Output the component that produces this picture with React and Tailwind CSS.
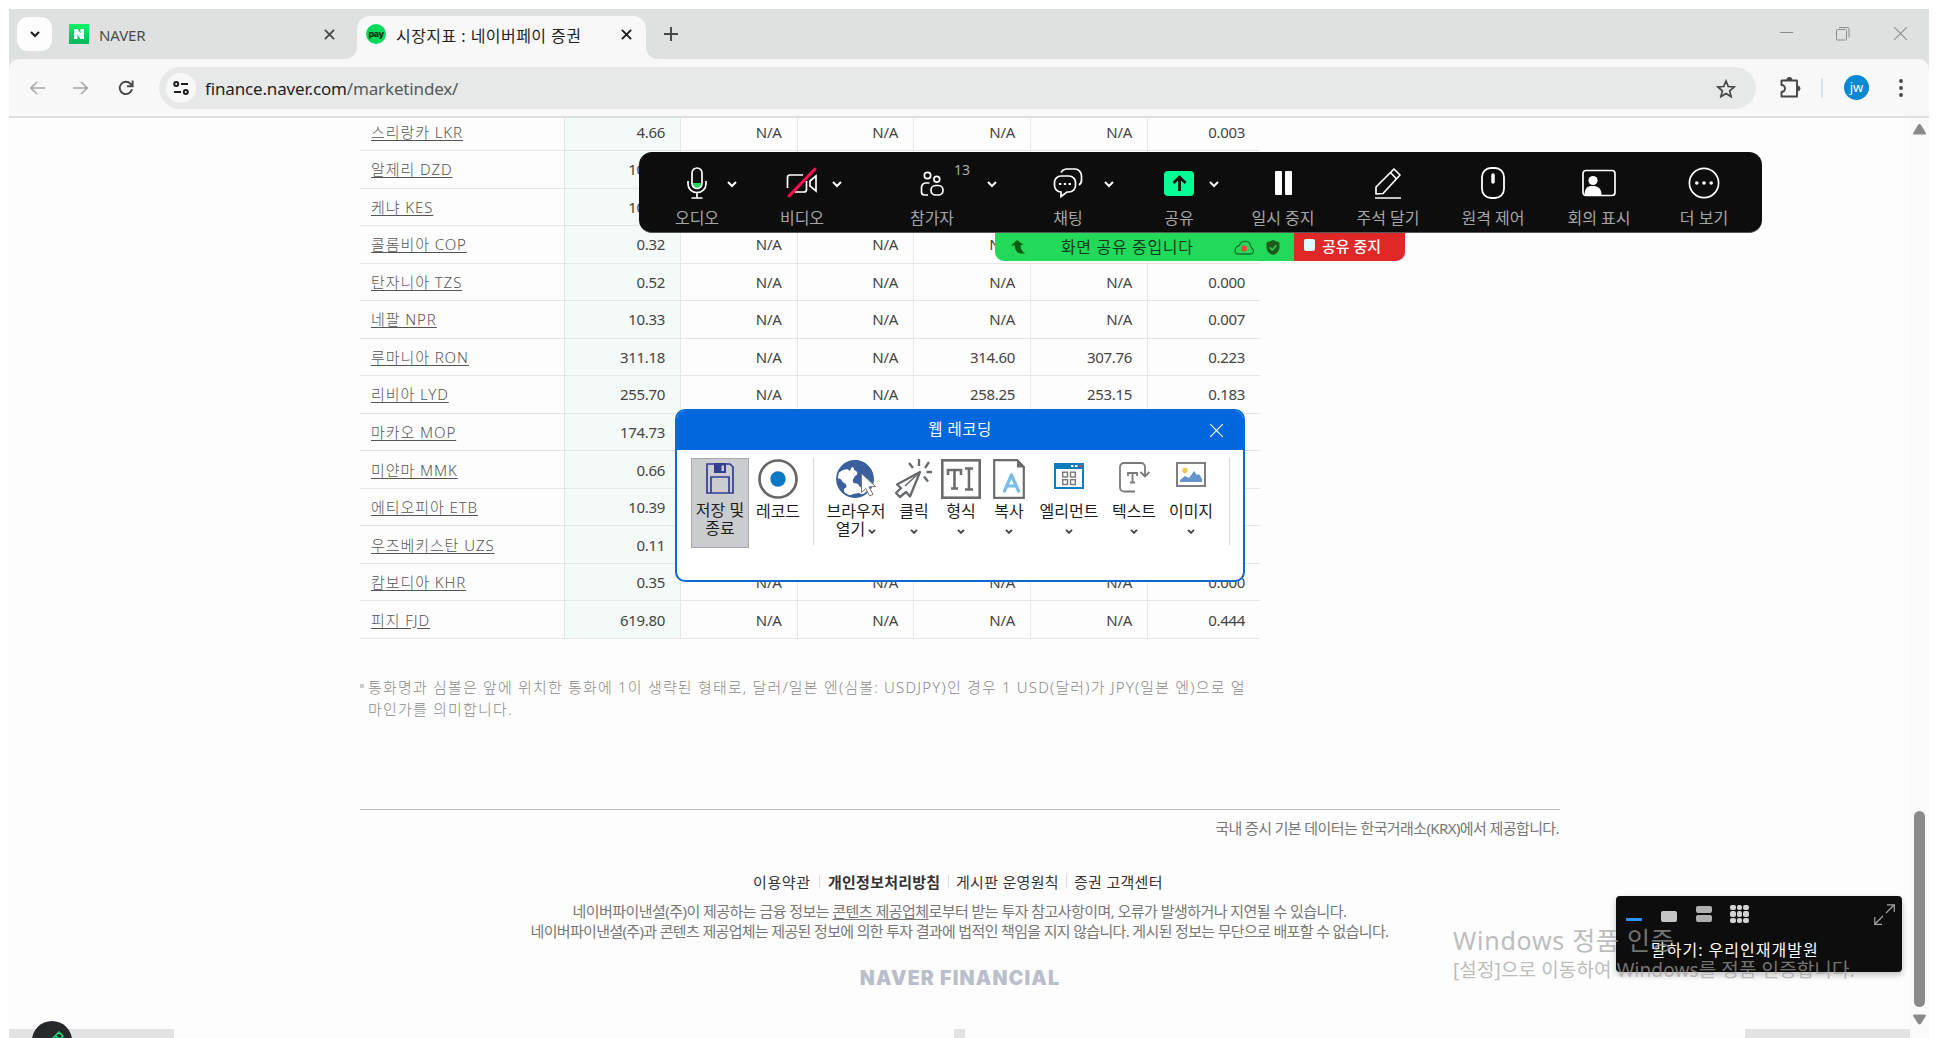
import React from "react";

const rows = [
  ["스리랑카 LKR", "4.66", "N/A", "N/A", "N/A", "N/A", "0.003"],
  ["알제리 DZD", "10.58", "", "", "", "", ""],
  ["케냐 KES", "10.80", "", "", "", "", ""],
  ["콜롬비아 COP", "0.32", "N/A", "N/A", "N/A", "", ""],
  ["탄자니아 TZS", "0.52", "N/A", "N/A", "N/A", "N/A", "0.000"],
  ["네팔 NPR", "10.33", "N/A", "N/A", "N/A", "N/A", "0.007"],
  ["루마니아 RON", "311.18", "N/A", "N/A", "314.60", "307.76", "0.223"],
  ["리비아 LYD", "255.70", "N/A", "N/A", "258.25", "253.15", "0.183"],
  ["마카오 MOP", "174.73", "", "", "", "", ""],
  ["미얀마 MMK", "0.66", "", "", "", "", ""],
  ["에티오피아 ETB", "10.39", "", "", "", "", ""],
  ["우즈베키스탄 UZS", "0.11", "", "", "", "", ""],
  ["캄보디아 KHR", "0.35", "N/A", "N/A", "N/A", "N/A", "0.000"],
  ["피지 FJD", "619.80", "N/A", "N/A", "N/A", "N/A", "0.444"],
];

function Svg({ w, h, box, className = "", sw = 2, children }) {
  return (
    <svg
      width={w}
      height={h}
      viewBox={box || `0 0 ${w} ${h}`}
      fill="none"
      stroke="currentColor"
      strokeWidth={sw}
      className={"block shrink-0 " + className}
    >
      {children}
    </svg>
  );
}

const Cross = ({ size, sw, className }) => (
  <Svg w={size} h={size} box="0 0 10 10" sw={sw} className={className}>
    <path d="M0.8 0.8L9.2 9.2M9.2 0.8L0.8 9.2" />
  </Svg>
);

function TabStrip() {
  return (
    <div className="flex h-[50px] w-full bg-[#dfe1e0]">
      <div className="ml-2 mt-2 flex h-[34px] w-[35px] items-center justify-center rounded-[11px] bg-[#fdfdfd]">
        <Svg w={10} h={7} sw={2.2} className="text-[#1f1f1f]"><path d="M1 1l4 4 4-4" /></Svg>
      </div>
      <div className="ml-[17px] flex h-[50px] w-[288px] items-center">
        <div className="flex h-5 w-5 items-center justify-center bg-gradient-to-b from-[#02f767] to-[#05b560]">
          <Svg w={10} h={10} sw={0} className="text-white">
            <path fill="#fff" d="M0 0h3.5l3 4.6V0H10v10H6.5l-3-4.6V10H0z" />
          </Svg>
        </div>
        <span className="ml-[10px] mt-[3px] text-[15px] tracking-[-0.1px] text-[#474b4a]">NAVER</span>
        <Cross size={11} sw={1.6} className="ml-auto mr-[22px] text-[#444746]" />
      </div>
      <div className="relative mt-[7px] flex h-[43px] w-[289px] items-center rounded-t-[13px] bg-[#f8f8f8]">
        <Svg w={12} h={12} sw={0} className="absolute -left-3 bottom-0"><path fill="#f8f8f8" d="M12 0v12H0A12 12 0 0 0 12 0z" /></Svg>
        <Svg w={12} h={12} sw={0} className="absolute -right-3 bottom-0"><path fill="#f8f8f8" d="M0 0v12h12A12 12 0 0 1 0 0z" /></Svg>
        <div className="-mt-[7px] ml-[9px] flex h-5 w-5 items-center justify-center rounded-full bg-[#03d95b] font-['Inter'] text-[9px] font-extrabold leading-none tracking-[-0.5px] text-[#062b14]">
          <span className="-mt-[2px]">pay</span>
        </div>
        <span className="-mt-[3px] ml-[10px] whitespace-nowrap text-[16px] tracking-[0.45px] text-[#1f1f1f]">시장지표 : 네이버페이 증권</span>
        <Cross size={11} sw={1.8} className="-mt-[7px] ml-auto mr-[14px] text-[#1f1f1f]" />
      </div>
      <Svg w={14} h={14} sw={1.9} className="ml-[18px] mt-[18px] text-[#444746]"><path d="M7 0v14M0 7h14" /></Svg>
      <div className="ml-auto flex items-start text-[#8b8d8c]">
        <Svg w={13} h={2} sw={1} className="mt-[23px]"><path d="M0 .5h13" /></Svg>
        <Svg w={14} h={14} sw={1} className="ml-[43px] mt-[18px]">
          <rect x=".5" y="2.5" width="10" height="10.5" rx="1" />
          <path d="M3 .5h8.5a1.5 1.5 0 0 1 1.5 1.5v8.5" />
        </Svg>
        <Svg w={13} h={13} sw={1.1} className="ml-[44px] mr-[22px] mt-[18px]"><path d="M0 0l13 13M13 0L0 13" /></Svg>
      </div>
    </div>
  );
}

function AddressRow() {
  return (
    <div className="h-[59px] w-full bg-[#dfe1e0]">
      <div className="flex h-[59px] items-start rounded-t-[10px] border-b-2 border-[#dedfde] bg-[#f8f8f8]">
        <Svg w={16} h={14} sw={1.7} className="ml-[20px] mt-[22px] text-[#a5a7a6]"><path d="M16 7H2M8 1L1.8 7 8 13" /></Svg>
        <Svg w={16} h={14} sw={1.7} className="ml-[28px] mt-[22px] text-[#a5a7a6]"><path d="M0 7h14M8 1l6.2 6L8 13" /></Svg>
        <Svg w={16} h={16} sw={1.9} className="ml-[29px] mt-[21px] text-[#444746]">
          <path d="M14 9.2A6.2 6.2 0 1 1 12.6 3.8L14 5.6" /><path d="M14.6 0.6v5.6H9" />
        </Svg>
        <div className="ml-[25px] mt-[8px] flex h-[42px] w-[1597px] items-center rounded-full bg-[#e7e9e8] pl-[7px]">
          <div className="flex h-[30px] w-[30px] items-center justify-center rounded-full bg-[#f8f8f8]">
            <Svg w={16} h={14} sw={2} className="text-[#1f1f1f]">
              <circle cx="3.2" cy="3" r="2" /><path d="M8 3h7M1 11h7" /><circle cx="12.8" cy="11" r="2" />
            </Svg>
          </div>
          <span className="ml-[9px] mt-[2px] text-[17px] tracking-[-0.16px] text-[#1f1f1f]">finance.naver.com<span className="text-[#55595a]">/marketindex/</span></span>
          <Svg w={20} h={19} sw={1.7} className="ml-auto mr-[20px] text-[#444746]">
            <path d="M10 2l2.3 5.5 5.9.5-4.5 3.9 1.4 5.8L10 14.6l-5.1 3.1 1.4-5.8L1.8 8l5.9-.5z" />
          </Svg>
        </div>
        <Svg w={21} h={21} sw={1.9} className="ml-[24px] mt-[18px] text-[#444746]">
          <path d="M1.5 3.5h15.5v16H1.5v-4.5a3 3 0 0 0 0-7z" strokeLinejoin="round" />
          <path d="M6.8 3a2.6 2.6 0 0 1 5.2 0zM17.5 9a2.4 2.4 0 0 1 0 5z" fill="currentColor" strokeWidth="1" />
        </Svg>
        <div className="ml-[20px] mt-[19px] h-5 w-[2px] rounded bg-[#d3e3ea]" />
        <div className="ml-[21px] mt-[16px] flex h-[25px] w-[25px] items-center justify-center rounded-full bg-[#0788d4] text-[13px] leading-none text-white">
          <span className="-mt-[1px]">jw</span>
        </div>
        <Svg w={4} h={18} sw={0} className="ml-[30px] mt-[20px] text-[#444746]">
          <g fill="currentColor"><circle cx="2" cy="2" r="1.9" /><circle cx="2" cy="9" r="1.9" /><circle cx="2" cy="16" r="1.9" /></g>
        </Svg>
      </div>
    </div>
  );
}

function RateTable() {
  return (
    <table className="ml-[351px] w-[900px] table-fixed border-collapse text-[15px] text-[#444]">
      <colgroup>
        <col className="w-[204px]" /><col className="w-[116.5px]" /><col className="w-[116.5px]" /><col className="w-[116.5px]" />
        <col className="w-[117px]" /><col className="w-[117px]" /><col className="w-[112.5px]" />
      </colgroup>
      <tbody>
        {rows.map(([name, ...cells]) => (
          <tr key={name} className="h-[37.54px] border-b border-[#e6e6e6]">
            <td className="p-0 pl-[11px] text-[15px] font-light leading-[18px] text-[#555]">
              <span className="tracking-[0.92px] underline underline-offset-[2px]">{name}</span>
            </td>
            {cells.map((c, i) => (
              <td
                key={i}
                className={
                  "border-l border-[#e6e6e6] p-0 pr-[15px] text-right leading-[18px] tracking-[-0.3px] " +
                  (i === 0 ? "bg-[#f4faf7]" : "")
                }
              >
                {c}
              </td>
            ))}
          </tr>
        ))}
      </tbody>
    </table>
  );
}

function Footer() {
  return (
    <div className="ml-[351px] mt-[171px] w-[1200px] border-t border-[#bdbdbd]">
      <p className="mt-[8px] pr-px text-right text-[15px] leading-[20px] tracking-[-0.6px] text-[#777]">국내 증시 기본 데이터는 한국거래소(KRX)에서 제공합니다.</p>
      <div className="mt-[33px] flex h-[22px] items-center whitespace-nowrap pl-[393px] text-[15px] text-[#333]">
        <span className="w-[66px] tracking-[0.6px]">이용약관</span>
        <i className="h-[13px] w-px bg-[#ddd]" />
        <b className="ml-[8px] w-[120px] font-bold tracking-[0.25px]">개인정보처리방침</b>
        <i className="h-[13px] w-px bg-[#ddd]" />
        <span className="ml-[7px] w-[110px] tracking-[0.3px]">게시판 운영원칙</span>
        <i className="h-[13px] w-px bg-[#ddd]" />
        <span className="ml-[7px] tracking-[0.3px]">증권 고객센터</span>
      </div>
      <div className="-ml-px mt-[8px] text-center text-[15px] leading-[20px] text-[#777]">
        <p className="tracking-[-0.55px]">네이버파이낸셜(주)이 제공하는 금융 정보는 <span className="underline underline-offset-2">콘텐츠 제공업체</span>로부터 받는 투자 참고사항이며, 오류가 발생하거나 지연될 수 있습니다.</p>
        <p className="tracking-[-0.66px]">네이버파이낸셜(주)과 콘텐츠 제공업체는 제공된 정보에 의한 투자 결과에 법적인 책임을 지지 않습니다. 게시된 정보는 무단으로 배포할 수 없습니다.</p>
      </div>
      <p className="mt-[25px] text-center font-['Inter'] text-[19.500px] font-black leading-[24px] tracking-[1.2px] text-[#b9becb]">NAVER FINANCIAL</p>
    </div>
  );
}

const Chev = () => (
  <div className="flex w-5 justify-center pt-[29px]">
    <Svg w={10} h={7} sw={2}><path d="M1 1l4 4 4-4" /></Svg>
  </div>
);

function Tool({ label, className, children }) {
  return (
    <div className={"relative flex shrink-0 flex-col items-center " + className}>
      <div className="mt-[14px] flex h-[34px] items-center justify-center">{children}</div>
      <span className="mt-[7px] whitespace-nowrap text-[16px] leading-[22px] text-[#a6a6a6]">{label}</span>
    </div>
  );
}

function MeetingBar() {
  return (
    <div className="absolute left-[639px] top-[152px] w-[1123px]">
      <div className="flex h-[81px] rounded-[13px] border-b border-[#555] bg-[#0d0d0d] pl-[33px] text-white">
        <Tool label="오디오" className="w-[50px]">
          <Svg w={20} h={32} sw={1.7}>
            <path d="M5 16h10v2a5 3.8 0 0 1-10 0z" fill="#23d959" stroke="none" />
            <rect x="5" y="1" width="10" height="20.5" rx="5" />
            <path d="M1 14v3a9 8.5 0 0 0 18 0v-3M10 25.5V31M4.5 31h11" />
          </Svg>
        </Tool>
        <Chev />
        <Tool label="비디오" className="ml-[35px] w-[50px]">
          <Svg w={32} h={32} sw={1.7}>
            <path d="M17 8H4a2.5 2.5 0 0 0-2.5 2.5V21M9 25h9a2.5 2.5 0 0 0 2.500-2.500V14M30 9l-6 5v5l6 5z" />
            <path d="M3 29L29 2" stroke="#ff0c52" strokeWidth="3" strokeLinecap="round" />
          </Svg>
        </Tool>
        <Chev />
        <Tool label="참가자" className="ml-[60px] w-[50px]">
          <Svg w={24} h={26} sw={1.7} className="mt-[2px]">
            <circle cx="7.500" cy="4.500" r="3.200" /><circle cx="16.800" cy="8.300" r="2.900" />
            <path d="M9.500 12H5.500A4 4.500 0 0 0 1.500 16.500V21a3 3 0 0 0 3 3H8" />
            <rect x="11" y="14.500" width="12" height="9.500" rx="4.500" />
          </Svg>
          <span className="absolute left-[47px] top-[9px] text-[14px] leading-[18px] text-[#aaa]">13</span>
        </Tool>
        <div className="w-[25px]" />
        <Chev />
        <Tool label="채팅" className="ml-[41px] w-[50px]">
          <Svg w={30} h={32} sw={1.7}>
            <path d="M8 5.500A7 6 0 0 1 13 2h9a6.500 7 0 0 1 6.500 7v4A6.500 6 0 0 1 26 18" />
            <path d="M8 9h8a6.500 6.500 0 0 1 6.500 6.500v3A6.500 6.500 0 0 1 16 25h-2l-6 4.500V25A6.500 6.500 0 0 1 1.500 18.500v-3A6.500 6.500 0 0 1 8 9z" />
            <path d="M6 17h2.300M10.800 17h2.300M15.600 17h2.300" strokeWidth="2.200" />
          </Svg>
        </Tool>
        <div className="w-[6px]" />
        <Chev />
        <Tool label="공유" className="ml-[35px] w-[50px]">
          <div className="flex h-[25px] w-[30px] items-center justify-center rounded-[4px] bg-[#00ff94]">
            <Svg w={15} h={16} sw={2.800} className="text-[#0d0d0d]"><path d="M7.500 16V2M1.500 8l6-6 6 6" /></Svg>
          </div>
        </Tool>
        <Chev />
        <Tool label="일시 중지" className="ml-[24px] w-[70px]">
          <div className="flex gap-[3px]"><i className="h-[24px] w-[7px] rounded-[1px] bg-white" /><i className="h-[24px] w-[7px] rounded-[1px] bg-white" /></div>
        </Tool>
        <Tool label="주석 달기" className="ml-[35px] w-[70px]">
          <Svg w={28} h={32} sw={1.700}>
            <path d="M2 27v-7L20 2l6 6L9 26.500z" strokeLinejoin="round" /><path d="M16.500 5.500l6 6.500M1 31h26" />
          </Svg>
        </Tool>
        <Tool label="원격 제어" className="ml-[35px] w-[70px]">
          <Svg w={24} h={32} sw={1.800}><rect x="1" y="1" width="22" height="30" rx="9" /><path d="M12 8v7" strokeWidth="3.500" strokeLinecap="round" /></Svg>
        </Tool>
        <Tool label="회의 표시" className="ml-[36px] w-[70px]">
          <Svg w={34} h={28} sw={1.700}>
            <rect x="1" y="1.500" width="32" height="25" rx="3" />
            <circle cx="11" cy="11.500" r="4.600" fill="#fff" stroke="none" />
            <path d="M2.500 26c0-8 4-9 8.500-9s8.500 2 8.500 9z" fill="#fff" stroke="none" />
          </Svg>
        </Tool>
        <Tool label="더 보기" className="ml-[35px] w-[70px]">
          <Svg w={32} h={32} sw={1.700}>
            <circle cx="16" cy="16" r="14.600" />
            <g fill="#fff" stroke="none"><circle cx="8.800" cy="16" r="1.800" /><circle cx="16" cy="16" r="1.800" /><circle cx="23.200" cy="16" r="1.800" /></g>
          </Svg>
        </Tool>
      </div>
      <div className="ml-[356px] flex h-[28px] w-[410px] overflow-hidden rounded-b-[9px]">
        <div className="flex w-[299px] items-center bg-[#23d959]">
          <Svg w={15} h={14} sw={0} className="ml-[16px] text-[#0a5c10]"><path fill="currentColor" d="M6 0l6.500 5H9.500c0 4 1.500 6.500 5 8.500H9.500C5.500 12.500 3.800 9.500 3.800 5.500H0z" /></Svg>
          <span className="-mt-[1px] ml-[35px] w-[152px] whitespace-nowrap text-[16px] tracking-[0.65px] text-[#10391c]">화면 공유 중입니다</span>
          <Svg w={20} h={15} sw={1.300} className="ml-[21px] text-[#14732b]">
            <path d="M4 14h12.500a3 3 0 0 0 2.500-4.500C18 8 16.500 7.500 16.500 5.500 16 3 14 1 12 1.500 9 1 6 2 5.500 5.500 3 6 1 8.500 1 11a3 3 0 0 0 3 3z" />
            <circle cx="10" cy="8.500" r="3" fill="#ff4336" stroke="none" />
          </Svg>
          <Svg w={14} h={15} sw={1.500} className="ml-[12px] text-[#23d959]">
            <path d="M7 0l6.500 2.500V7c0 4-3 7-6.500 8C3.500 14 .5 11 .5 7V2.500z" fill="#1f5a1c" stroke="none" /><path d="M3.800 7.500L6.200 10l4.300-4.800" />
          </Svg>
        </div>
        <div className="flex flex-1 items-center bg-[#e02828] pl-[10px]">
          <i className="-mt-[5px] h-[12px] w-[11px] rounded-[2px] bg-[#dcfbff]" />
          <span className="-mt-[2px] ml-[7px] text-[15px] font-medium text-white">공유 중지</span>
        </div>
      </div>
    </div>
  );
}

function RibbonItem({ className, label, second, chevron, gap = "mt-[3px]", children }) {
  return (
    <div className={"flex shrink-0 flex-col items-center " + className}>
      <div className="flex h-[42px] items-center justify-center">{children}</div>
      <span className={"whitespace-nowrap text-[16px] leading-[17px] text-[#1c1c1c] " + gap}>{label}</span>
      {(second || chevron) && (
        <span className="flex h-[18px] items-center gap-[3px] whitespace-nowrap text-[16px] leading-[17px] text-[#1c1c1c]">
          {second}
          {chevron && <Svg w={8} h={5} sw={1.900} className="mt-[4px] text-[#444]"><path d="M1 .8l3 3 3-3" /></Svg>}
        </span>
      )}
    </div>
  );
}

function RecorderDialog() {
  return (
    <div className="absolute left-[675px] top-[409px] h-[173px] w-[570px] overflow-hidden rounded-[10px] border-2 border-[#0b6ad0] bg-white">
      <div className="relative flex h-[39px] items-center justify-center bg-[#0067dd]">
        <span className="-mt-px text-[15.500px] tracking-[0.5px] text-white">웹 레코딩</span>
        <Cross size={15} sw={0.800} className="absolute right-[19px] top-[12px] text-white" />
      </div>
      <div className="flex h-[96px] items-start pl-[14px] pt-[8px]">
        <RibbonItem label="저장 및" second="종료" gap="mt-px" className="h-[90px] w-[58px] border border-[#a6a7ab] bg-[#cbccd0]">
          <Svg w={28} h={31} sw={1.700} className="-mt-[4px] text-[#353c93]">
            <path d="M1 1h23l3 3v26H1z" /><path d="M8 0h12v10H8z" fill="#353c93" stroke="none" /><path d="M15.500 2.500h2.500v5.500h-2.500z" fill="#cbccd0" stroke="none" /><path d="M5 30V14h18v16" />
          </Svg>
        </RibbonItem>
        <RibbonItem label="레코드" className="ml-[4px] w-[50px]">
          <Svg w={40} h={40} sw={2.700} className="text-[#666]"><circle cx="20" cy="20" r="18.500" /><circle cx="20" cy="20" r="7.700" fill="#0a78c4" stroke="none" /></Svg>
        </RibbonItem>
        <div className="ml-[10px] h-[87px] w-px bg-[#d9d9d9]" />
        <RibbonItem label="브라우저" second="열기" chevron className="ml-[10px] w-[64px]">
          <Svg w={42} h={40} sw={1}>
            <circle cx="20" cy="20" r="18" fill="#fff" stroke="#3a609e" strokeWidth="1.800" />
            <path fill="#3a609e" stroke="none" d="M20 1.500A18.500 18.500 0 0 1 38.500 20c0 2-.4 4-1 6L27 15v14c-2-1-3-2-4-4-2-1-4 0-5-2s1-4 2-6c2-1 3-2 2-4s-3-1-3-3-2-2-3-1l-1 3-3-2-4 1-5 3C6 6 12 1.500 20 1.500zM1.700 19l4 1 2 3 3 2 1 3-3 2 1 5C4.500 32 1.700 26 1.700 19zM14 37l4-2 6-1 4 2-3 2-5 .5z" />
            <path fill="#fff" stroke="#777" d="M26.500 14.500l14 13-6.500.3 4 7.500-3.500 1.700-3.700-7.500-4.300 4z" />
          </Svg>
        </RibbonItem>
        <RibbonItem label="클릭" chevron className="ml-[6px] w-[40px]">
          <Svg w={38} h={40} sw={2.300} className="text-[#66696b]">
            <path d="M25 13L2 25.500l4 3.500-5 5 4 4 6-5 4 4.500z" strokeLinejoin="round" />
            <path d="M25 13L10 27" strokeWidth="1.600" />
            <path d="M24 0v7M14 4l4 5M34 3l-4 6M31.500 13H37M29 17.500l4 5" />
          </Svg>
        </RibbonItem>
        <RibbonItem label="형식" chevron className="ml-[5px] w-[44px]">
          <Svg w={40} h={40} sw={2.600} className="text-[#6b6c6e]">
            <rect x="1.300" y="1.300" width="37.400" height="37.400" />
            <path d="M7 16v-5h13v5M13.500 11v18M10 29.500h7M24 9.500h8M28 10v20M24 30.500h8" />
          </Svg>
        </RibbonItem>
        <RibbonItem label="복사" chevron className="ml-[6px] w-[40px]">
          <Svg w={32} h={40} sw={2.200} className="text-[#6b6c6e]">
            <path d="M1.200 1.200h23L30.800 8v30.800H1.200z" /><path d="M24 0v8.500h8z" fill="currentColor" stroke="none" />
            <path d="M11.500 32L18.500 16l7 16M14 27h9.500" stroke="#79bce4" strokeWidth="3.200" strokeLinecap="round" strokeLinejoin="round" />
          </Svg>
        </RibbonItem>
        <RibbonItem label="엘리먼트" chevron className="ml-[8px] w-[64px]">
          <Svg w={30} h={26} sw={2} className="-mt-[7px] text-[#0f7cbd]">
            <rect x="1" y="1" width="28" height="24" /><path d="M0 0h30v6H0z" fill="currentColor" stroke="none" />
            <path d="M17 3h2.500M21 3h2.500" stroke="#fff" /><path d="M25.500 3h2" stroke="#f33" />
            <g stroke="#777" strokeWidth="1.400"><rect x="8.700" y="9.200" width="4.800" height="4.800" /><rect x="16.500" y="9.200" width="4.800" height="4.800" /><rect x="8.700" y="16.700" width="4.800" height="4.800" /><rect x="16.500" y="16.700" width="4.800" height="4.800" /></g>
          </Svg>
        </RibbonItem>
        <RibbonItem label="텍스트" chevron className="ml-[7px] w-[52px]">
          <Svg w={32} h={31} sw={1.800} className="-mt-[4px] text-[#77797b]">
            <path d="M17 29.500H6A4 4 0 0 1 2 25.500V5A4 4 0 0 1 6 1h17a4 4 0 0 1 4 4v9M22.500 10l4.500 4.500 4.500-4.500" />
            <path d="M10 14v-3h9v3M14.500 11v9.500M12 20.500h5" />
          </Svg>
        </RibbonItem>
        <RibbonItem label="이미지" chevron className="ml-[7px] w-[48px]">
          <Svg w={30} h={25} sw={1.900} className="-mt-[10px] text-[#77797b]">
            <rect x="1" y="1" width="28" height="23" /><circle cx="9" cy="8.500" r="2.700" fill="#eccb50" stroke="none" />
            <path d="M4 20v-2l5-4 4 2 5-7 3 4 2-1 3 5v3z" fill="#6693cc" stroke="none" />
          </Svg>
        </RibbonItem>
        <div className="ml-[14px] h-[87px] w-px bg-[#d9d9d9]" />
      </div>
    </div>
  );
}

function SpeakerPanel() {
  return (
    <div className="absolute left-[1616px] top-[896px] h-[76px] w-[286px] rounded-[4px] bg-[#0d0d0d] shadow-[0_3px_6px_rgba(0,0,0,0.25)]">
      <div className="flex items-start pl-[10px] pr-[7px] pt-[8px]">
        <i className="mt-[14px] h-[3px] w-[16px] rounded-[1px] bg-[#2f93ff]" />
        <i className="ml-[19px] mt-[7px] h-[11px] w-[16px] rounded-[2px] bg-[#c4c4c4]" />
        <div className="ml-[19px] mt-[2px] flex flex-col gap-[2px]"><i className="h-[7px] w-[16px] rounded-[2px] bg-[#b0b0b0]" /><i className="h-[7px] w-[16px] rounded-[2px] bg-[#b0b0b0]" /></div>
        <div className="ml-[18px] mt-[1px] grid grid-cols-3 gap-[1px]">
          {Array.from({ length: 9 }, (_, i) => <i key={i} className="h-[5.300px] w-[5.500px] rounded-[2px] bg-[#d2d2d2]" />)}
        </div>
        <Svg w={21} h={21} sw={1.200} className="ml-auto text-[#a4a4a4]"><path d="M12 9l8-8M13 .8h7.300V8M9 12l-8 8M.8 13v7.300H8" /></Svg>
      </div>
      <p className="absolute left-[35px] top-[43px] whitespace-nowrap text-[16px] leading-[22px] tracking-[1px] text-white">말하기: 우리인재개발원</p>
    </div>
  );
}

export default function App() {
  return (
    <div className="relative h-[1038px] w-[1938px] overflow-hidden bg-white pl-[9px] pt-[9px] font-['Noto_Sans','Noto_Sans_CJK_KR',sans-serif]">
      <div className="flex h-[1029px] w-[1920px] flex-col bg-[#fdfdfd]">
        <TabStrip />
        <AddressRow />
        <div className="flex min-h-0 flex-1">
          <div className="flex w-[1901px] flex-col overflow-hidden">
            <div className="-mt-[5px]">
              <RateTable />
              <div className="ml-[351px] mt-[37px] flex w-[900px] text-[15px] font-light leading-[22px] text-[#8a8a8a]">
                <i className="mt-[8px] h-[4px] w-[4px] bg-[#ccc]" />
                <p className="ml-[4px] whitespace-nowrap tracking-[1.18px]">통화명과 심볼은 앞에 위치한 통화에 1이 생략된 형태로, 달러/일본 엔(심볼: USDJPY)인 경우 1 USD(달러)가 JPY(일본 엔)으로 얼<br />마인가를 의미합니다.</p>
              </div>
            </div>
            <div className="-mt-[82px]"><Footer /></div>
            <div className="mt-auto flex h-[9px] shrink-0 justify-between">
              <div className="w-[165px] bg-[#e3e3e3]" /><div className="w-[11px] bg-[#e3e3e3]" /><div className="w-[165px] bg-[#e3e3e3]" />
            </div>
          </div>
          <div className="flex w-[19px] flex-col items-center bg-[#fafafa] pt-[6px] text-[#8a8a8a]">
            <Svg w={13} h={11} sw={0}><path fill="currentColor" d="M6.500 0q1 0 1.600 1L12.800 9q.4 1.500-1 1.500H1.200Q-.2 10.500.2 9L4.900 1q.6-1 1.600-1z" /></Svg>
            <div className="mt-[676px] h-[196px] w-[11px] rounded-full bg-current" />
            <Svg w={13} h={11} sw={0} className="mt-[7px]"><path fill="currentColor" d="M6.500 10.500q-1 0-1.600-1L.2 2Q-.2.5 1.200.5h10.600q1.400 0 1 1.500L8.100 9.500q-.6 1-1.600 1z" /></Svg>
          </div>
        </div>
      </div>
      <MeetingBar />
      <RecorderDialog />
      <SpeakerPanel />
      <div className="absolute left-[1453px] top-[924px] whitespace-nowrap text-[#a1a1a1] opacity-[0.69]">
        <p className="text-[25px] leading-[32px] tracking-[0.75px]">Windows 정품 인증</p>
        <p className="text-[19px] leading-[28px] tracking-[0.12px]">[설정]으로 이동하여 Windows를 정품 인증합니다.</p>
      </div>
      <div className="absolute left-[32px] top-[1021px] flex h-10 w-10 items-start justify-center rounded-full bg-[#26282b] pt-[9px] text-[#13dc7a]">
        <Svg w={20} h={20} sw={1.500} className="ml-[3px]"><path d="M2 15L15 2l4 4L6 19H2zM11.500 5.500l4 4" /></Svg>
      </div>
    </div>
  );
}
